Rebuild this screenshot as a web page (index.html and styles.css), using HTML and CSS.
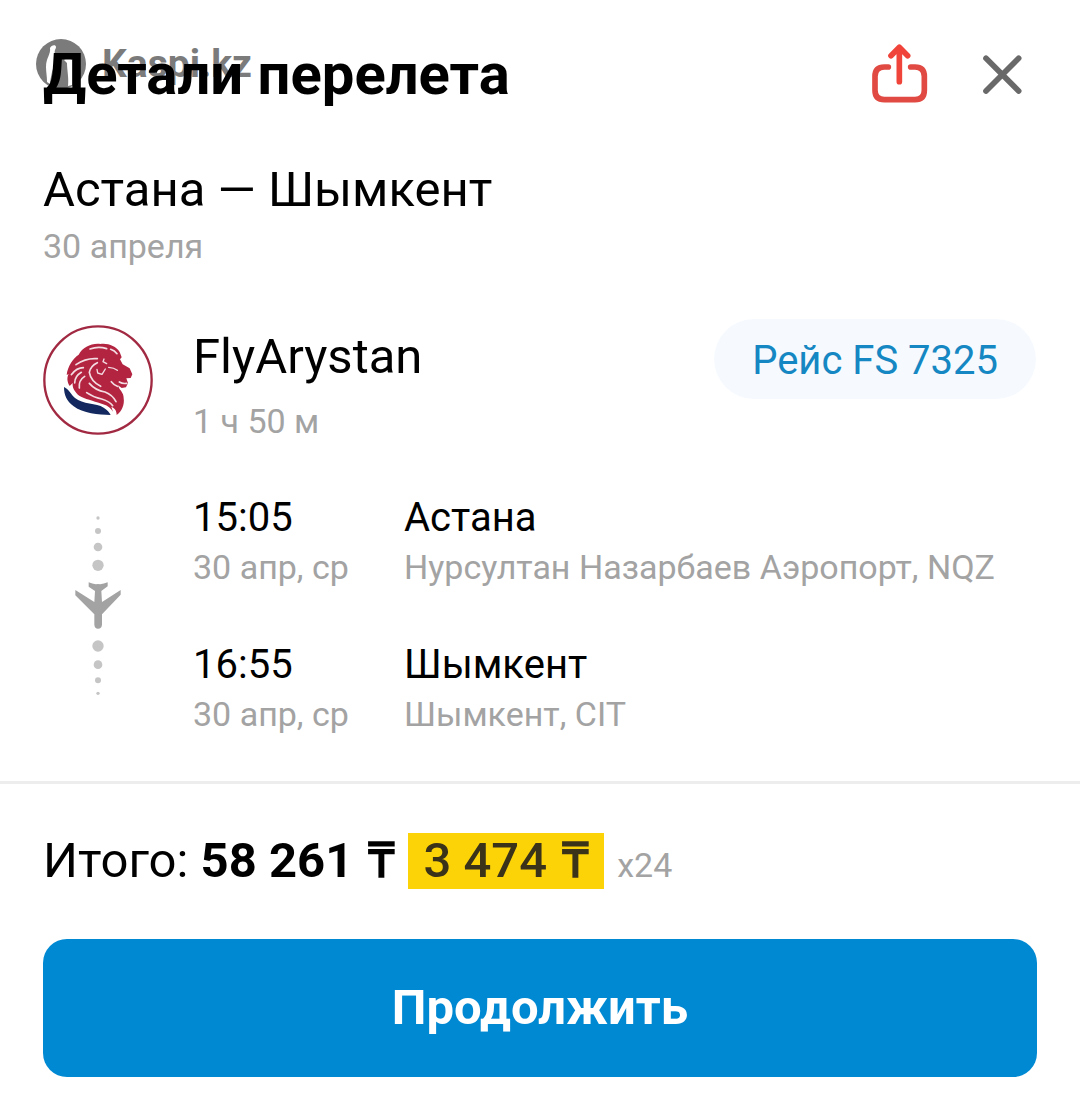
FILE: index.html
```html
<!DOCTYPE html>
<html lang="ru">
<head>
<meta charset="utf-8">
<meta name="viewport" content="width=device-width, initial-scale=1">
<title>Детали перелета</title>
<link rel="stylesheet" href="styles.css">
</head>
<body>
<main class="sheet">
  <header class="header">
    <div class="brand">
      <svg class="brand-mark" viewBox="0 0 50 50" aria-hidden="true">
        <circle cx="25" cy="25" r="25" fill="#7b7b7b"/>
        <path d="M14 9c1-3 6-4 6-1 0 2-2 3-1 7 1 7-1 12-3 18-1 5-2 9-2 12l-3-2c0-6-1-10-1-15 0-9 5-13 4-19zM28 21c2-2 6-2 8 0v25l-4 1c1-8-1-16-1-23z" fill="#fff"/>
      </svg>
      <span>Kaspi.kz</span>
    </div>
    <h1 class="title">Детали перелета</h1>
    <div class="actions">
      <button class="icon-button" type="button" aria-label="Поделиться">
        <svg width="56" height="60" viewBox="66 42 168 180" fill="none" stroke="#e04a42" stroke-width="17" stroke-linecap="round" stroke-linejoin="round">
          <path d="M115 111H103Q75 111 75 139V181Q75 209 103 209H195Q223 209 223 181V139Q223 111 195 111H182"/>
          <path d="M148 155V54M123 77L148 52L173 77" stroke="#f0443a"/>
        </svg>
      </button>
      <button class="icon-button" type="button" aria-label="Закрыть">
        <svg width="39" height="39" viewBox="400 72 117 117" fill="none" stroke="#696969" stroke-width="17" stroke-linecap="round">
          <path d="M409 82L507 180M507 82L409 180"/>
        </svg>
      </button>
    </div>
  </header>

  <section class="route">
    <h2 class="heading">Астана — Шымкент</h2>
    <p class="note">30 апреля</p>
  </section>

  <section class="flight">
    <svg class="logo" viewBox="39 30 330 330" role="img" aria-label="FlyArystan">
      <circle cx="204" cy="195" r="161" fill="#fff" stroke="#a12a42" stroke-width="7"/>
      <path d="M102 216C116 222 122 237 135 249C158 269 199 263 221 278Q237 288 242 300C205 300 159 295 131 274C110 258 102 240 102 216Z" fill="#12285f"/>
      <path d="M146 119C158 97 184 84 211 87C234 84 258 93 269 111L275 127L270 133L278 148L299 160L307 178L302 189L289 190L294 204L288 217L275 219L264 211C266 224 282 232 281 250C284 268 276 290 260 300C260 284 251 278 244 275L249 290C237 267 208 265 187 257C161 250 145 245 135 229C129 221 127 212 128 204L119 213C111 201 110 187 116 177L110 180C113 153 129 130 146 119Z" fill="#b32441"/>
      <g fill="none" stroke="#f3dde2" stroke-width="5" stroke-linecap="round" stroke-linejoin="round">
        <path d="M180 102Q205 93 230 101M242 103Q254 107 261 116M138 149Q168 128 202 131M124 179Q140 158 160 158M134 204Q134 184 154 172M148 219Q145 196 164 184M202 143Q182 152 178 172Q182 198 212 214M178 205Q196 226 225 231Q248 240 258 260M170 233Q190 247 215 252Q240 260 248 272M244 200Q252 210 262 214M268 201Q278 207 290 205"/>
        <path d="M222 132L219 140L230 146M201 163L203 174L216 178L226 162M236 157Q252 158 262 166" stroke-width="4"/>
      </g>
    </svg>
    <div class="carrier">
      <div>
        <h3 class="heading">FlyArystan</h3>
        <p class="note">1 ч 50 м</p>
      </div>
      <a class="flight-number" href="#flight">Рейс FS 7325</a>
    </div>

    <svg class="track" width="48" height="182" viewBox="70 50 144 546" aria-hidden="true">
      <g fill="#c5c5c5">
        <circle cx="142" cy="56" r="5"/><circle cx="142" cy="95" r="9"/><circle cx="142" cy="143" r="13"/><circle cx="142" cy="198" r="17"/>
        <circle cx="142" cy="440" r="17"/><circle cx="142" cy="496" r="13"/><circle cx="142" cy="543" r="9"/><circle cx="142" cy="582" r="5"/>
      </g>
      <path d="M114 249Q128 256 142 254Q156 256 171 249V261L152 275L154 308L210 272V286L154 345V376Q153 388 142 388Q132 388 131 376V345L74 288V272L131 308L133 275L114 262Z" fill="#a3a3a3"/>
    </svg>
    <div class="stops">
      <div>
        <p class="stop-main"><time datetime="15:05">15:05</time></p>
        <p class="note">30 апр, ср</p>
      </div>
      <div>
        <p class="stop-main">Астана</p>
        <p class="note">Нурсултан Назарбаев Аэропорт, NQZ</p>
      </div>
      <div>
        <p class="stop-main"><time datetime="16:55">16:55</time></p>
        <p class="note">30 апр, ср</p>
      </div>
      <div>
        <p class="stop-main">Шымкент</p>
        <p class="note">Шымкент, CIT</p>
      </div>
    </div>
  </section>

  <footer class="summary">
    <p class="total">
      <span>Итого: <strong>58 261 <span class="currency">₸</span></strong></span>
      <span class="installment">3 474 <span class="currency">₸</span></span>
      <span class="note">x24</span>
    </p>
    <button class="continue" type="button">Продолжить</button>
  </footer>
</main>
</body>
</html>
```
FILE: styles.css
```css
* {
  box-sizing: border-box;
}

body,
h1,
h2,
h3,
p {
  margin: 0;
}

body {
  background: #fff;
  color: #000;
  font-family: Roboto, sans-serif;
}

button {
  font-family: inherit;
  border: 0;
  cursor: pointer;
}

svg {
  display: block;
}

.header {
  position: relative;
  display: flex;
  align-items: center;
  justify-content: space-between;
  padding: 42px 58px 0 43px;
}

.brand {
  position: absolute;
  left: 36px;
  top: 39px;
  display: flex;
  align-items: center;
  gap: 16px;
  color: #7b7b7b;
  font-size: 39px;
  line-height: 50px;
  font-weight: 700;
}

.brand-mark {
  width: 50px;
  height: 50px;
}

.title {
  position: relative;
  font-size: 58px;
  line-height: 64px;
  font-weight: 700;
}

.actions {
  display: flex;
  align-items: center;
  gap: 55px;
}

.icon-button {
  padding: 0;
  background: none;
}

.route {
  padding: 56px 43px 0;
}

.heading {
  font-size: 49px;
  line-height: 56px;
  font-weight: 400;
}

.note {
  color: #a3a3a3;
  font-size: 34px;
  line-height: 40px;
  white-space: nowrap;
}

.route .note {
  margin-top: 8px;
}

.flight {
  display: grid;
  grid-template-columns: 110px 1fr;
  gap: 47px 40px;
  padding: 59px 44px 47px 43px;
}

.logo {
  width: 110px;
  height: 110px;
}

.carrier {
  display: flex;
  align-items: flex-start;
  justify-content: space-between;
  padding-top: 4px;
}

.carrier .note {
  margin-top: 16px;
}

.flight-number {
  margin: -10px 0 0;
  padding: 18px 38px 14px;
  border-radius: 40px;
  background: #f6faff;
  color: #1587c2;
  font-size: 40px;
  line-height: 48px;
  text-decoration: none;
}

.track {
  justify-self: center;
  margin-top: 28px;
}

.stops {
  display: grid;
  grid-template-columns: 156px 1fr;
  gap: 54px 55px;
  padding-top: 6px;
}

.stop-main {
  margin-bottom: 5px;
  font-size: 40px;
  line-height: 48px;
}

.summary {
  padding: 49px 43px 42px;
  border-top: 3px solid #ededed;
}

.total {
  display: flex;
  align-items: center;
  gap: 13px;
  font-size: 49px;
  line-height: 56px;
}

.currency {
  margin-left: 3px;
  font-weight: 700;
}

.installment {
  padding: 0 15px;
  background: #fcd307;
  color: #3b321a;
  font-weight: 500;
}

.total .note {
  padding-top: 8px;
}

.continue {
  width: 100%;
  margin-top: 50px;
  padding: 41px 24px;
  border-radius: 24px;
  background: #0089d3;
  color: #fff;
  font-size: 49px;
  line-height: 56px;
  font-weight: 700;
}
```
